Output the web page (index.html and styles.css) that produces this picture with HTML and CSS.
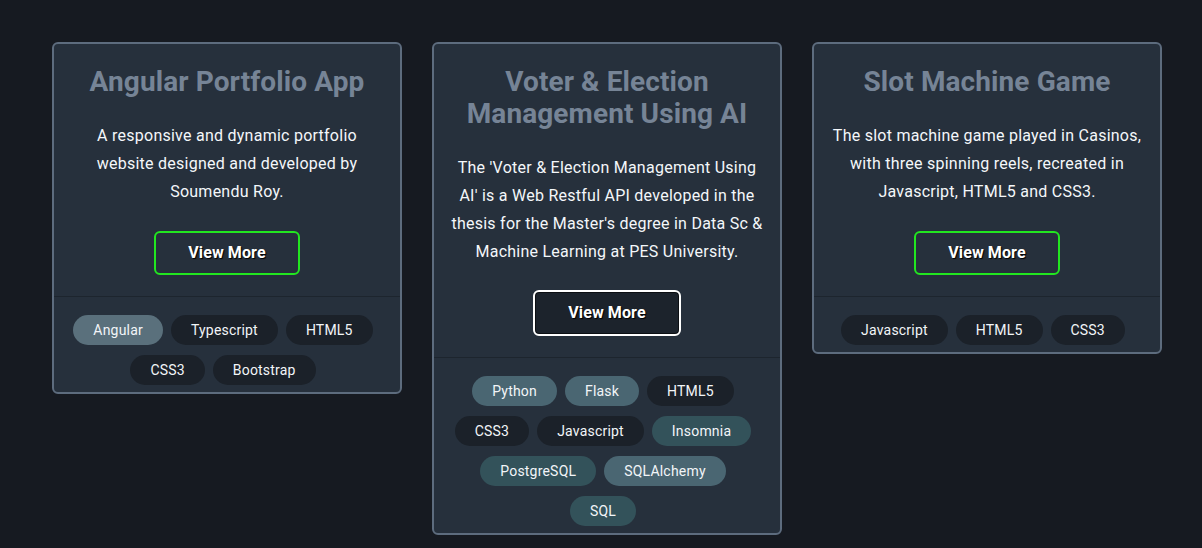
FILE: index.html
```html
<!DOCTYPE html>
<html lang="en">
<head>
<meta charset="utf-8">
<title>Projects</title>
<link rel="stylesheet" href="styles.css">
</head>
<body>
<main class="projects">
  <article class="card">
    <div class="card-body">
      <h2 class="card-title">Angular Portfolio App</h2>
      <p class="card-text">A responsive and dynamic portfolio website designed and developed by Soumendu Roy.</p>
      <a class="btn" href="#">View More</a>
    </div>
    <div class="card-tags">
      <span class="tag tag-slate">Angular</span>
      <span class="tag">Typescript</span>
      <span class="tag">HTML5</span>
      <span class="tag">CSS3</span>
      <span class="tag">Bootstrap</span>
    </div>
  </article>

  <article class="card">
    <div class="card-body">
      <h2 class="card-title">Voter &amp; Election Management Using AI</h2>
      <p class="card-text">The 'Voter &amp; Election Management Using AI' is a Web Restful API developed in the thesis for the Master's degree in Data Sc &amp; Machine Learning at PES University.</p>
      <a class="btn btn-focus" href="#">View More</a>
    </div>
    <div class="card-tags">
      <span class="tag tag-blue">Python</span>
      <span class="tag tag-blue">Flask</span>
      <span class="tag">HTML5</span>
      <span class="tag">CSS3</span>
      <span class="tag">Javascript</span>
      <span class="tag tag-teal">Insomnia</span>
      <span class="tag tag-teal">PostgreSQL</span>
      <span class="tag tag-blue">SQLAlchemy</span>
      <span class="tag tag-teal">SQL</span>
    </div>
  </article>

  <article class="card">
    <div class="card-body">
      <h2 class="card-title">Slot Machine Game</h2>
      <p class="card-text">The slot machine game played in Casinos, with three spinning reels, recreated in Javascript, HTML5 and CSS3.</p>
      <a class="btn" href="#">View More</a>
    </div>
    <div class="card-tags">
      <span class="tag">Javascript</span>
      <span class="tag">HTML5</span>
      <span class="tag">CSS3</span>
    </div>
  </article>
</main>
</body>
</html>
```

FILE: styles.css
```css
* {
  box-sizing: border-box;
}

html, body {
  margin: 0;
  padding: 0;
  background: #161a21;
  font-family: Roboto, "Liberation Sans", sans-serif;
  color: #ffffff;
}

.projects {
  display: flex;
  align-items: flex-start;
  gap: 30px;
  padding: 42px 0 0 52px;
  min-height: 548px;
}

.card {
  width: 350px;
  flex: 0 0 350px;
  background: #26303c;
  border: 2px solid #5d6c7e;
  border-radius: 6px;
  display: flex;
  flex-direction: column;
}

.card-body {
  padding: 22px 16px 21px;
  text-align: center;
  border-bottom: 1px solid #1d252e;
}

.card-title {
  margin: 0 0 24px;
  font-size: 28px;
  line-height: 32px;
  font-weight: 700;
  color: #768496;
  letter-spacing: 0.1px;
}

.card-text {
  margin: 0;
  font-size: 16px;
  line-height: 28px;
  color: #f4f7fa;
  letter-spacing: 0.25px;
}

.btn {
  display: inline-block;
  margin-top: 25px;
  padding: 10px 32px;
  border: 2px solid #22e620;
  border-radius: 6px;
  font-size: 16px;
  line-height: 20px;
  font-weight: 700;
  color: #ffffff;
  text-decoration: none;
  letter-spacing: 0.1px;
  text-shadow: 1px 1px 1px #000;
}

.btn-focus {
  margin-top: 24px;
  padding: 11px 33px;
  border-color: #ffffff;
  background: #1c232c;
  box-shadow: inset 0 0 0 1px #0c0f13;
}

.card-tags {
  display: flex;
  flex-wrap: wrap;
  justify-content: center;
  row-gap: 10px;
  padding: 18px 12px 7px;
}

.tag {
  display: inline-block;
  height: 30px;
  margin-right: 8px;
  padding: 0 20px;
  border-radius: 15px;
  background: #1b2129;
  font-size: 14px;
  line-height: 30px;
  color: #f2f5f8;
  letter-spacing: 0.2px;
}

.tag-slate {
  background: #5a707c;
}

.tag-blue {
  background: #4a6672;
}

.tag-teal {
  background: #33525a;
}
```
